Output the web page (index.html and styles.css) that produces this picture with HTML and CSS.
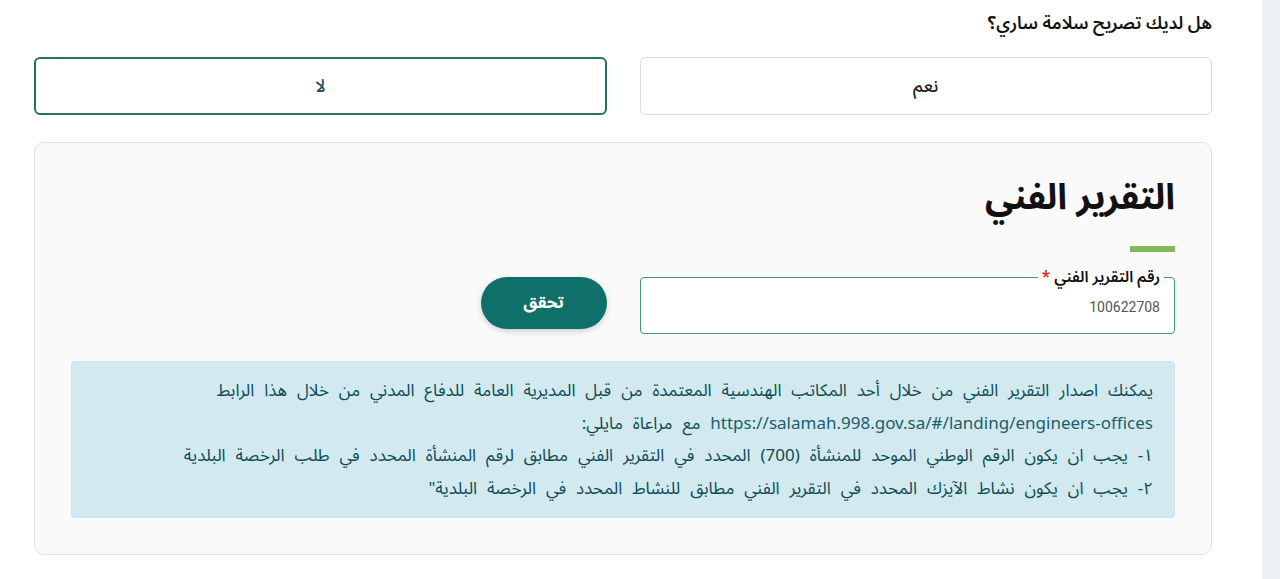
FILE: index.html
```html
<!DOCTYPE html>
<html lang="ar" dir="rtl">
<head>
<meta charset="utf-8">
<link rel="stylesheet" href="styles.css">
</head>
<body>
<div class="page">
  <div class="strip"></div>
  <main class="main">
    <p class="question">هل لديك تصريح سلامة ساري؟</p>
    <div class="choices">
      <button class="choice">نعم</button>
      <button class="choice active">لا</button>
    </div>
    <section class="card">
      <h1 class="title">التقرير الفني</h1>
      <div class="bar"></div>
      <div class="row">
        <div class="field">
          <span class="label">رقم التقرير الفني <span class="req">*</span></span>
          <span class="value">100622708</span>
        </div>
        <div class="actions">
          <button class="verify">تحقق</button>
        </div>
      </div>
      <div class="info">
        <p>يمكنك اصدار التقرير الفني من خلال أحد المكاتب الهندسية المعتمدة من قبل المديرية العامة للدفاع المدني من خلال هذا الرابط</p>
        <p><span class="link" dir="ltr">https://salamah.998.gov.sa/#/landing/engineers-offices</span> مع مراعاة مايلي:</p>
        <p>١- يجب ان يكون الرقم الوطني الموحد للمنشأة (700) المحدد في التقرير الفني مطابق لرقم المنشأة المحدد في طلب الرخصة البلدية</p>
        <p>٢- يجب ان يكون نشاط الآيزك المحدد في التقرير الفني مطابق للنشاط المحدد في الرخصة البلدية"</p>
      </div>
    </section>
  </main>
</div>
</body>
</html>
```

FILE: styles.css
```css
* { box-sizing: border-box; }
html, body { margin: 0; padding: 0; }
body {
  font-family: "Noto Sans Arabic", "Noto Sans", "DejaVu Sans", sans-serif;
  background: #ffffff;
  color: #1a1a1a;
  height: 579px;
  overflow: hidden;
}
.page {
  display: flex;
  flex-direction: row;
  height: 579px;
}
.strip {
  width: 18px;
  background: #edf0f4;
  flex: none;
}
.main {
  flex: 1;
  padding: 10px 50px 0 34px;
}
.question {
  margin: 0;
  font-size: 17.5px;
  font-weight: 600;
  line-height: 28px;
  color: #111;
}
.choices {
  display: grid;
  grid-template-columns: 1fr 1fr;
  gap: 33px;
  margin-top: 19px;
}
.choice {
  height: 58px;
  background: #fff;
  border: 1px solid #dcdcdc;
  border-radius: 6px;
  font-family: inherit;
  font-size: 18px;
  font-weight: 500;
  color: #222;
}
.choice.active {
  border: 2px solid #2a6e6c;
  color: #234f4e;
}
.card {
  margin-top: 27px;
  background: #fafafa;
  border: 1px solid #e0e0e0;
  border-radius: 10px;
  padding: 28px 36px 36px 36px;
}
.title {
  margin: 0;
  font-size: 36px;
  font-weight: 700;
  line-height: 54px;
  color: #111;
}
.bar {
  width: 45px;
  height: 6px;
  background: #80bb5a;
  margin-top: 21px;
}
.row {
  display: grid;
  grid-template-columns: 1fr 1fr;
  gap: 33px;
  margin-top: 25px;
}
.field {
  position: relative;
  height: 57px;
  border: 1px solid #3f9a6e;
  border-radius: 4px;
  background: #fff;
  display: flex;
  align-items: flex-end;
  padding: 0 14px 18px 14px;
}
.label {
  position: absolute;
  top: -11px;
  right: 10px;
  padding: 0 4px;
  background: linear-gradient(to bottom, #fafafa 50%, #fff 50%);
  font-size: 15.5px;
  font-weight: 600;
  line-height: 20px;
  color: #111;
}
.req { color: #d32f2f; }
.value {
  font-family: "Roboto", "Liberation Sans", sans-serif;
  font-size: 14px;
  color: #555;
}
.actions {
  display: flex;
  justify-content: flex-start;
}
.verify {
  width: 126px;
  height: 52px;
  border: none;
  border-radius: 26px;
  background: #0f706a;
  color: #fff;
  font-family: inherit;
  font-size: 17px;
  font-weight: 700;
  box-shadow: 0 2px 6px rgba(0,0,0,0.18);
}
.info {
  margin-top: 27px;
  background: #d2eaef;
  border: 1px solid #c6e4ea;
  border-radius: 4px;
  padding: 13px 21px 12px 21px;
  color: #0d4a55;
  font-size: 17px;
  line-height: 32.5px;
  word-spacing: 5.5px;
}
.info p { margin: 0; white-space: nowrap; height: 32.5px; }
.link {
  color: #1b5e6b;
  font-family: "Noto Sans", sans-serif;
  font-size: 17px;
  line-height: 1;
  word-spacing: 0;
}
```
